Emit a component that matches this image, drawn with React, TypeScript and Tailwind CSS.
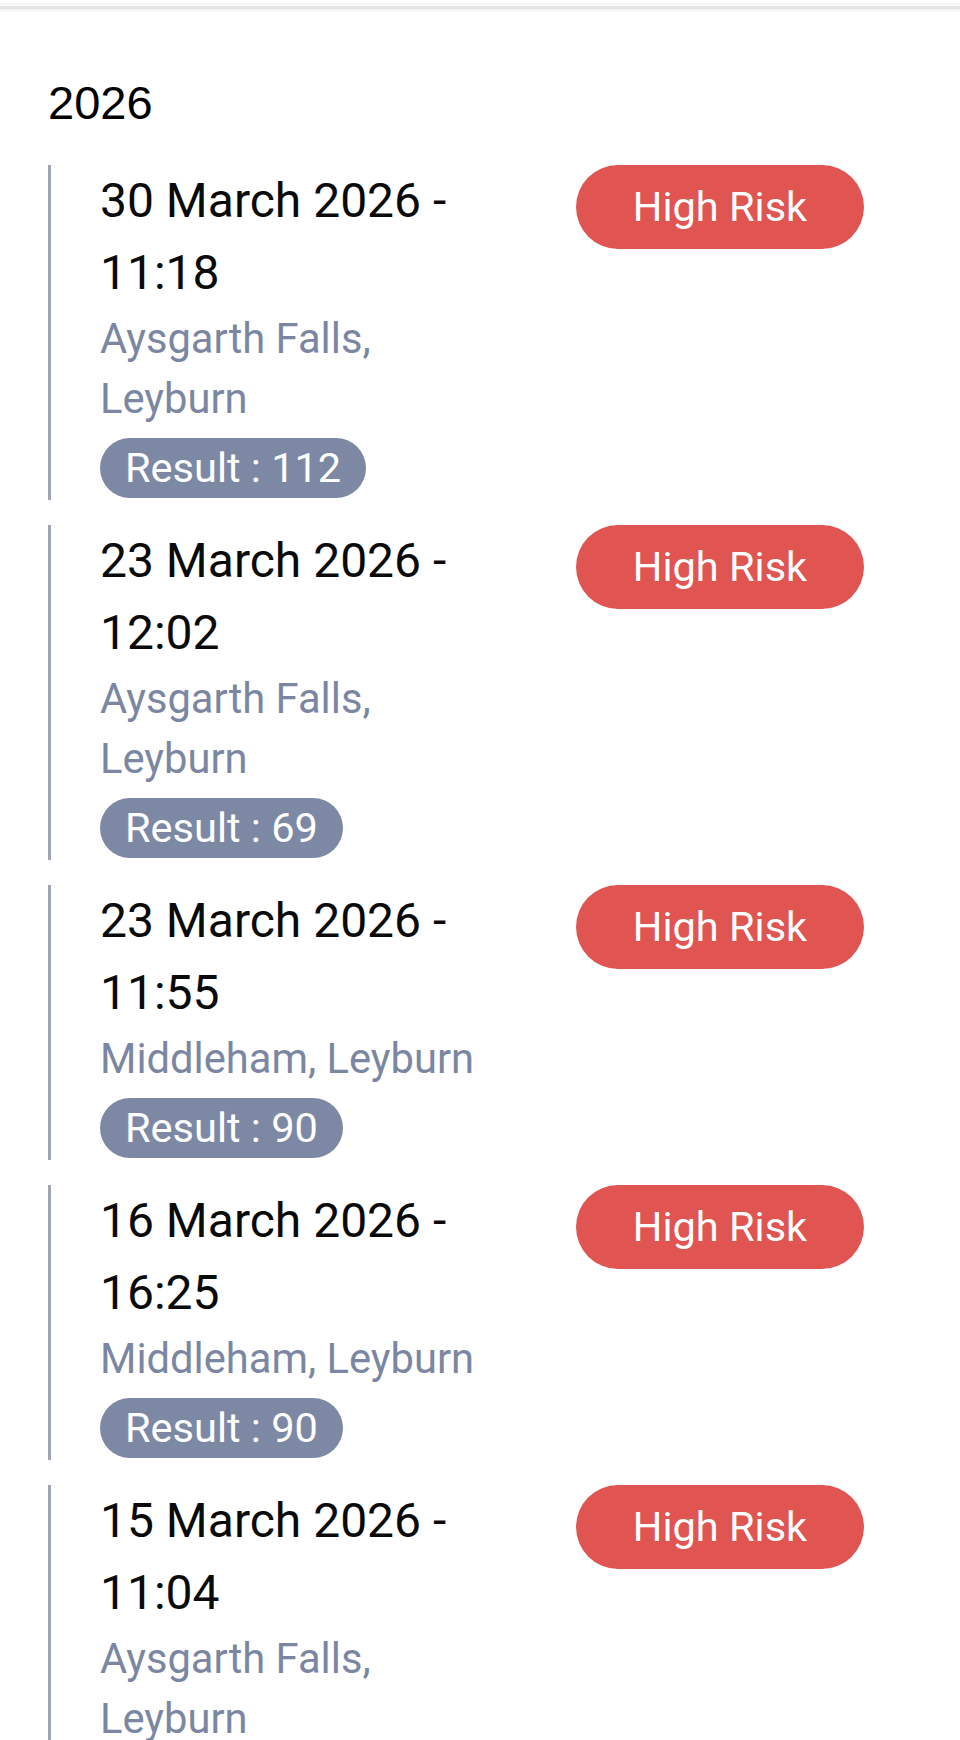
type Entry = {
  date: string;
  time: string;
  place: string;
  result: number;
};

const entries: Entry[] = [
  { date: "30 March 2026", time: "11:18", place: "Aysgarth Falls, Leyburn", result: 112 },
  { date: "23 March 2026", time: "12:02", place: "Aysgarth Falls, Leyburn", result: 69 },
  { date: "23 March 2026", time: "11:55", place: "Middleham, Leyburn", result: 90 },
  { date: "16 March 2026", time: "16:25", place: "Middleham, Leyburn", result: 90 },
  { date: "15 March 2026", time: "11:04", place: "Aysgarth Falls, Leyburn", result: 112 },
];

function HistoryItem({ entry }: { entry: Entry }) {
  return (
    <div className="flex border-l-[3px] border-[#a0a5b1] pl-[49px] pb-[2px]">
      <div className="w-[400px] shrink-0">
        <div className="text-[48px] leading-[72px] text-[#0a0a0a]">
          {entry.date} - {entry.time}
        </div>
        <div className="text-[41.7px] leading-[60px] text-[#7b87a2]">{entry.place}</div>
        <div className="mt-[9px] inline-flex h-[60px] items-center rounded-full bg-[#7d89a4] px-[25px] text-[41.5px] leading-none text-white">
          Result : {entry.result}
        </div>
      </div>
      <div className="ml-auto flex h-[84px] w-[288px] shrink-0 items-center justify-center rounded-full bg-[#e05451] text-[41.5px] leading-none text-white">
        High Risk
      </div>
    </div>
  );
}

export default function App() {
  return (
    <div className="h-[1740px] overflow-hidden bg-white font-['Roboto',sans-serif]">
      <div className="h-[3px] bg-white" />
      <div className="h-px bg-[#f2f2f2]" />
      <div className="h-[2px] bg-[#fafafa]" />
      <div className="h-[3px] bg-[#e4e4e4]" />
      <div className="h-[2px] bg-[#f3f3f3]" />
      <div className="h-px bg-[#fafafa]" />

      <div className="pl-[48px] pr-[96px] pt-[55px]">
        <div className="font-['Liberation_Sans',sans-serif] text-[47px] leading-[72px] text-black">
          2026
        </div>
        <div className="mt-[26px] space-y-[25px]">
          {entries.map((e, i) => (
            <HistoryItem key={i} entry={e} />
          ))}
        </div>
      </div>
    </div>
  );
}
